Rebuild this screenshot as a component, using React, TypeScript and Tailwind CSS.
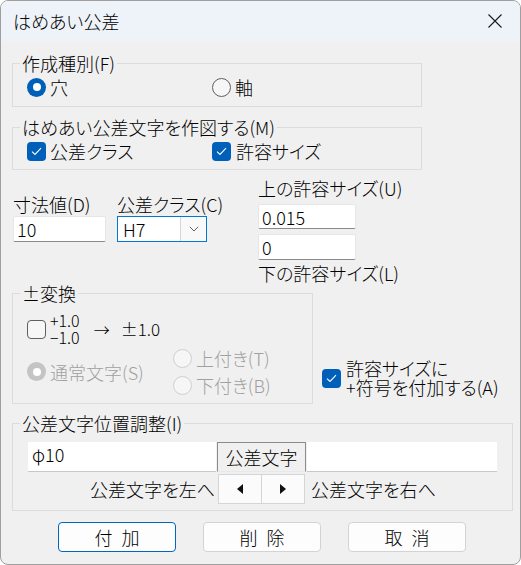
import type { ReactNode } from "react";

const font = "[font-family:'Noto_Sans_CJK_JP',sans-serif] [font-feature-settings:'palt']";

function Radio({ checked, disabled }: { checked?: boolean; disabled?: boolean }) {
  if (checked) {
    return (
      <span
        className={`flex h-[19px] w-[19px] shrink-0 items-center justify-center rounded-full ${
          disabled ? "bg-[#c4c4c4]" : "bg-[#005fb8]"
        }`}
      >
        <span className="h-[8px] w-[8px] rounded-full bg-white" />
      </span>
    );
  }
  return (
    <span
      className={`h-[19px] w-[19px] shrink-0 rounded-full border ${
        disabled ? "border-[#cfcfcf] bg-[#f6f6f6]" : "border-[#5f5f5f] bg-[#f6f6f6]"
      }`}
    />
  );
}

function Check({ checked }: { checked?: boolean }) {
  if (!checked) {
    return <span className="h-[19px] w-[19px] shrink-0 rounded-[4px] border border-[#5f5f5f] bg-[#f6f6f6]" />;
  }
  return (
    <span className="flex h-[19px] w-[19px] shrink-0 items-center justify-center rounded-[4px] bg-[#005fb8]">
      <svg width="11" height="9" viewBox="0 0 11 9" fill="none">
        <path d="M1 4.6 L4 7.5 L10 1.2" stroke="white" strokeWidth="1.1" />
      </svg>
    </span>
  );
}

function Group({ label, className, children }: { label: string; className: string; children: ReactNode }) {
  return (
    <fieldset className={`border border-[#dcdcdc] ${className}`}>
      <legend className="ml-[7px] px-[2px] leading-[20px]">{label}</legend>
      {children}
    </fieldset>
  );
}

function TextBox({ value, className }: { value: string; className: string }) {
  return (
    <div
      className={`flex items-center rounded-[2px] border border-[#e6e6e6] border-b-[#8a8a8a] bg-white pl-[3px] ${className}`}
    >
      {value}
    </div>
  );
}

function Button({ a, b, focused }: { a: string; b: string; focused?: boolean }) {
  return (
    <button
      className={`flex h-[30px] w-[118px] items-center justify-center gap-[9px] rounded-[4px] bg-[#fdfdfd] ${
        focused ? "border border-[#0067c0]" : "border border-[#d3d3d3]"
      }`}
    >
      <span>{a}</span>
      <span>{b}</span>
    </button>
  );
}

export default function App() {
  return (
    <div
      className={`h-[565px] w-[521px] whitespace-nowrap bg-white text-[18px] font-light leading-[20px] text-black ${font}`}
    >
      <div className="flex h-full flex-col overflow-hidden rounded-[8px] border border-[#9f9f9f] bg-[#f0f0f0]">
        {/* title bar */}
        <div className="flex h-[40px] shrink-0 items-center justify-between bg-[#eef3f9] pl-[12px] pr-[18px]">
          <span>はめあい公差</span>
          <svg width="14" height="14" viewBox="0 0 14 14">
            <path d="M0.5 0.5 L13.5 13.5 M13.5 0.5 L0.5 13.5" stroke="#1a1a1a" strokeWidth="1.1" />
          </svg>
        </div>

        <div className="flex flex-col px-[11px]">
          <Group label="作成種別(F)" className="mt-[12px] w-[410px]">
            <div className="flex pb-[9px] pl-[14px] pt-[4px]">
              <label className="flex w-[185px] items-center gap-[4px]">
                <Radio checked />
                <span>穴</span>
              </label>
              <label className="flex items-center gap-[4px]">
                <Radio />
                <span>軸</span>
              </label>
            </div>
          </Group>

          <Group label="はめあい公差文字を作図する(M)" className="mt-[10px] w-[410px]">
            <div className="flex pb-[8px] pl-[14px] pt-[4px]">
              <label className="flex w-[185px] items-center gap-[4px]">
                <Check checked />
                <span>公差クラス</span>
              </label>
              <label className="flex items-center gap-[5px]">
                <Check checked />
                <span>許容サイズ</span>
              </label>
            </div>
          </Group>

          {/* dimension / tolerance inputs */}
          <div className="flex items-start">
            <div className="ml-[1px] mt-[24px] flex w-[93px] flex-col">
              <span>寸法値(D)</span>
              <TextBox value="10" className="mt-[2px] h-[26px]" />
            </div>
            <div className="ml-[11px] mt-[24px] flex w-[90px] flex-col">
              <span>公差クラス(C)</span>
              <div className="mt-[2px] flex h-[26px] items-stretch border border-[#0078d4] bg-white">
                <span className="flex flex-1 items-center pl-[5px]">H7</span>
                <span className="flex w-[26px] items-center justify-center border-l border-[#d6d6d6] bg-[#f9f9f9]">
                  <svg width="10" height="6" viewBox="0 0 10 6" fill="none">
                    <path d="M0.8 0.8 L5 5 L9.2 0.8" stroke="#606060" strokeWidth="1" />
                  </svg>
                </span>
              </div>
            </div>
            <div className="ml-[51px] mt-[8px] flex w-[98px] flex-col">
              <span>上の許容サイズ(U)</span>
              <TextBox value="0.015" className="mt-[6px] h-[25px]" />
              <TextBox value="0" className="mt-[5px] h-[26px]" />
              <span className="mt-[3px]">下の許容サイズ(L)</span>
            </div>
          </div>

          {/* ± conversion */}
          <div className="flex items-start">
            <Group label="±変換" className="w-[301px]">
              <div className="flex flex-col pb-[8px] pl-[14px] pt-[9px]">
                <div className="flex items-center">
                  <Check />
                  <div className="ml-[4px] flex flex-col text-[16px] leading-[17px]">
                    <span>+1.0</span>
                    <span>−1.0</span>
                  </div>
                  <span className="ml-[14px] text-[16px]">→</span>
                  <span className="ml-[11px] text-[17px]">±1.0</span>
                </div>
                <div className="mt-[2px] flex items-center text-[#a0a0a0]">
                  <label className="flex w-[146px] items-center gap-[4px]">
                    <Radio checked disabled />
                    <span>通常文字(S)</span>
                  </label>
                  <div className="flex flex-col gap-[7px]">
                    <label className="flex items-center gap-[4px]">
                      <Radio disabled />
                      <span>上付き(T)</span>
                    </label>
                    <label className="flex items-center gap-[4px]">
                      <Radio disabled />
                      <span>下付き(B)</span>
                    </label>
                  </div>
                </div>
              </div>
            </Group>
            <label className="ml-[9px] mt-[76px] flex items-center gap-[5px]">
              <Check checked />
              <span className="flex flex-col leading-[19px]">
                <span>許容サイズに</span>
                <span>+符号を付加する(A)</span>
              </span>
            </label>
          </div>

          {/* tolerance text position */}
          <Group label="公差文字位置調整(I)" className="mt-[9px] w-[501px]">
            <div className="flex flex-col pb-[6px] pl-[15px] pt-[9px]">
              <div className="flex h-[30px] gap-[1px]">
                <div className="flex w-[188px] items-start border-b border-[#c8c8c8] bg-white pl-[4px] pt-[2px]">
                  φ10
                </div>
                <div className="flex w-[89px] items-center justify-center border border-[#8c8c8c] border-b-[#e8e8e8] bg-[#f0f0f0]">
                  公差文字
                </div>
                <div className="w-[190px] border-b border-[#c8c8c8] bg-white" />
              </div>
              <div className="mt-[2px] flex h-[30px] items-center">
                <span className="w-[188px] pr-[1px] text-right">公差文字を左へ</span>
                <div className="ml-[2px] flex h-full">
                  <span className="flex w-[44px] items-center justify-center border border-[#d5d5d5] bg-[#fbfbfb]">
                    <svg width="6" height="10" viewBox="0 0 6 10">
                      <path d="M6 0 L0 5 L6 10 Z" fill="#111" />
                    </svg>
                  </span>
                  <span className="flex w-[43px] items-center justify-center border border-l-0 border-[#d5d5d5] bg-[#fbfbfb]">
                    <svg width="6" height="10" viewBox="0 0 6 10">
                      <path d="M0 0 L6 5 L0 10 Z" fill="#111" />
                    </svg>
                  </span>
                </div>
                <span className="ml-[6px]">公差文字を右へ</span>
              </div>
            </div>
          </Group>

          <div className="ml-[46px] mt-[11px] flex gap-[27px]">
            <Button a="付" b="加" focused />
            <Button a="削" b="除" />
            <Button a="取" b="消" />
          </div>
        </div>
      </div>
    </div>
  );
}
